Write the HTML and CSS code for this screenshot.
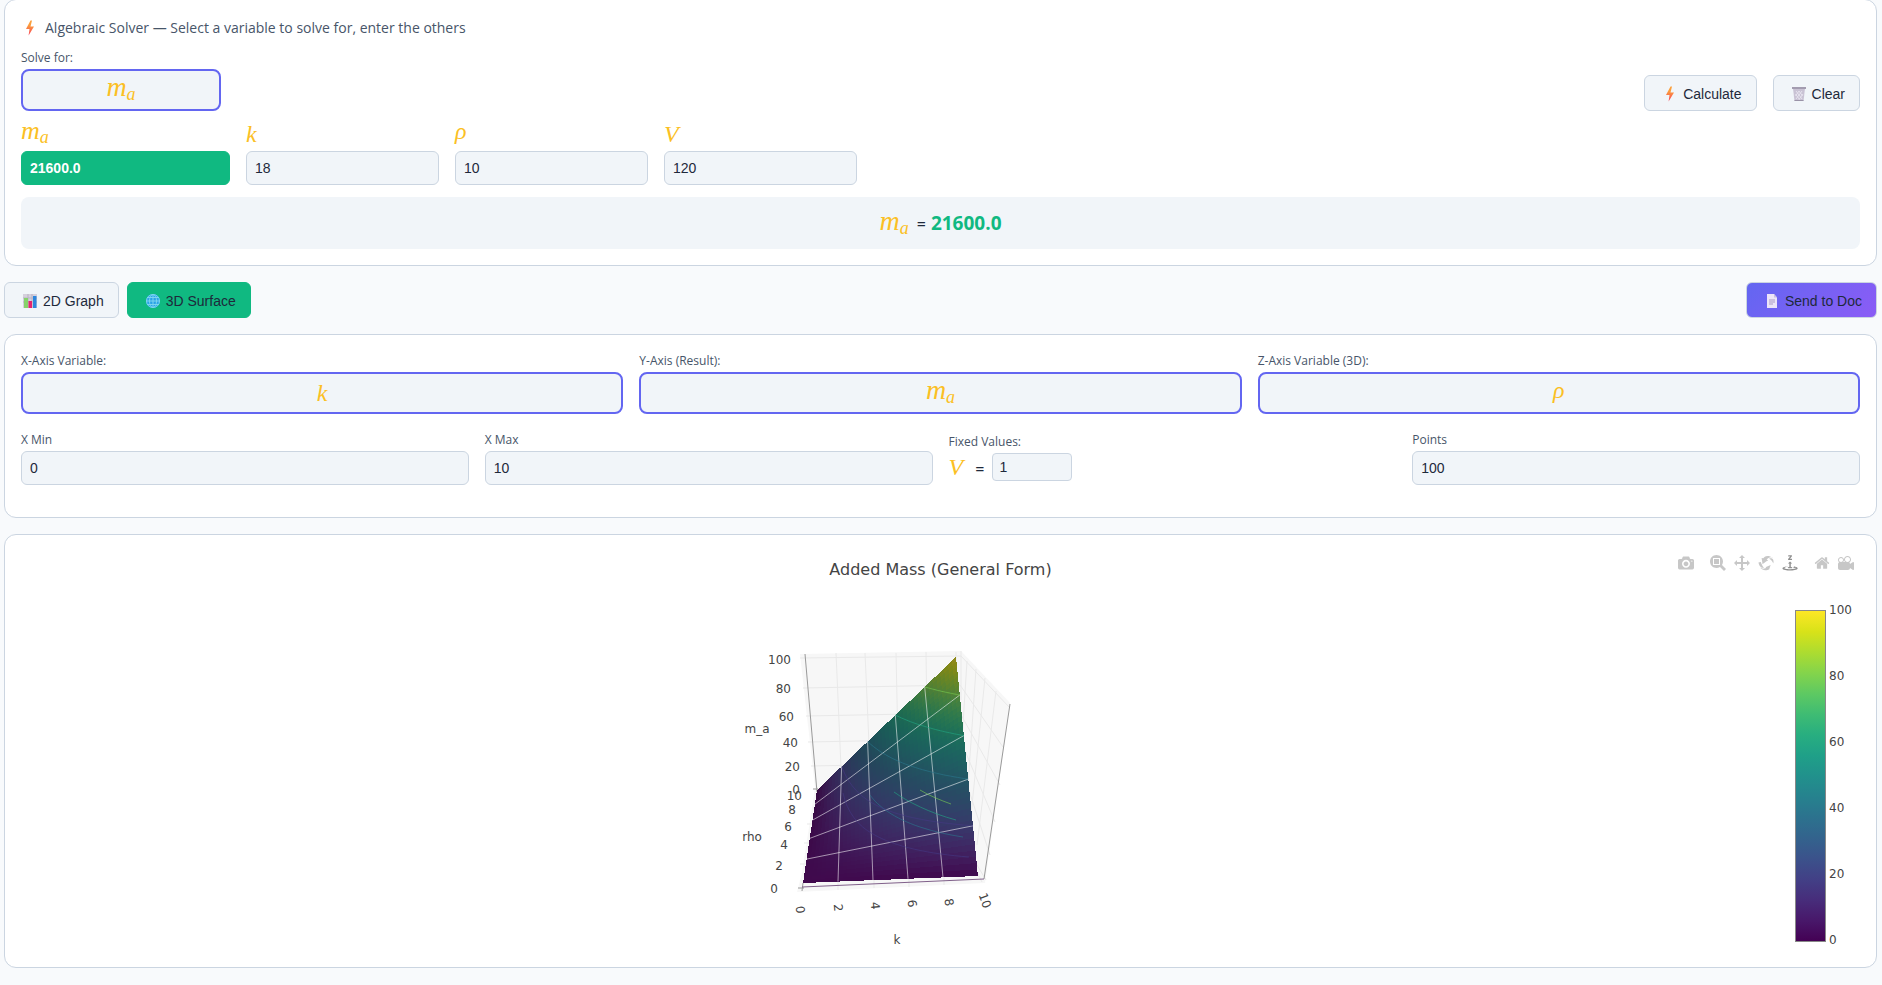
FILE: index.html
```
<!DOCTYPE html>
<html lang="en">
<head>
  <meta charset="UTF-8" />
  <meta name="viewport" content="width=device-width, initial-scale=1.0" />
  <title>Added Mass (General Form)</title>
  <link rel="stylesheet" href="styles.css">
</head>
<body>
  <svg class="defs" aria-hidden="true">
    <defs>
      <linearGradient id="boltFill" x1="0" y1="0" x2="0" y2="1">
        <stop offset="0.3" stop-color="#fb9f3c" />
        <stop offset="1" stop-color="#f8405a" />
      </linearGradient>
      <symbol id="bolt" viewBox="0 0 18 18">
        <path d="M9.5 1.5 5 10h3.5L7.6 16.500 13 7.500H9.500L11 1.500z" fill="url(#boltFill)" />
      </symbol>
      <symbol id="trash" viewBox="0 0 18 18">
        <path d="M3 3.500h12L13.500 16h-9z" fill="#c9c2d4" />
        <path d="M2 2h14v2H2z" fill="#a39cb0" />
        <path d="M6 6l6 8M9 6l3.500 5M5.500 9l4 5.500M12 6l-6 8M9 6 5.500 11M13 9l-4 5.500" stroke="#e6e2ee" stroke-width="1" />
        <path d="M4.500 15.500h9" stroke="#9a93a8" />
      </symbol>
      <symbol id="chart" viewBox="0 0 18 18">
        <path d="M2 2h14v14H2z" fill="#d5d0dc" />
        <path d="M2 6h14M2 10h14M7 2v14M11 2v14" stroke="#b9b3c4" />
        <path d="M3 6h4v10H3z" fill="#86d36a" />
        <path d="M7.500 9h3.500v7H7.500z" fill="#e5246e" />
        <path d="M12 4h3.500v12H12z" fill="#2e86dd" />
      </symbol>
      <symbol id="globe" viewBox="0 0 18 18">
        <circle cx="9" cy="9" r="7" fill="#2aa3e8" />
        <g fill="none" stroke="#7ad4f0" stroke-width="1">
          <circle cx="9" cy="9" r="6.500" />
          <ellipse cx="9" cy="9" rx="3.500" ry="6.500" />
          <path d="M9 2v14M2 9h14M3 5.500h12M3 12.500h12" />
        </g>
      </symbol>
      <symbol id="page" viewBox="0 0 18 18">
        <path d="M4 2h7l3 3.500V16H4z" fill="#ece4f8" />
        <path d="M11 2v3.500h3z" fill="#cbbfe0" />
        <path d="M6 8h6M6 10h6M6 12h4" stroke="#a99bc4" />
      </symbol>
    </defs>
  </svg>

  <main>
    <section class="card solver">
      <div class="card-title"><svg class="icon"><use href="#bolt" /></svg>Algebraic Solver — Select a variable to solve for, enter the others</div>

      <div class="solver-top">
        <div class="solve-for">
          <span class="label" id="solveLabel">Solve for:</span>
          <button class="picker" type="button" aria-haspopup="listbox" aria-labelledby="solveLabel"><span class="math deep wide">m<sub>a</sub></span></button>
        </div>
        <div class="actions">
          <button class="btn" type="button"><svg class="icon"><use href="#bolt" /></svg>Calculate</button>
          <button class="btn" type="button"><svg class="icon"><use href="#trash" /></svg>Clear</button>
        </div>
      </div>

      <div class="vars">
        <div class="var">
          <label for="var_ma"><span class="math deep wide">m<sub>a</sub></span></label>
          <input class="field solved" id="var_ma" type="text" value="21600.0" readonly>
        </div>
        <div class="var">
          <label for="var_k"><span class="math">k</span></label>
          <input class="field" id="var_k" type="text" value="18">
        </div>
        <div class="var">
          <label for="var_rho"><span class="math deep">ρ</span></label>
          <input class="field" id="var_rho" type="text" value="10">
        </div>
        <div class="var">
          <label for="var_V"><span class="math">V</span></label>
          <input class="field" id="var_V" type="text" value="120">
        </div>
      </div>

      <div class="result"><span class="math wide">m<sub>a</sub></span><span>=</span><strong>21600.0</strong></div>
    </section>

    <div class="tabs">
      <button class="btn" type="button"><svg class="icon"><use href="#chart" /></svg>2D Graph</button>
      <button class="btn active" type="button"><svg class="icon"><use href="#globe" /></svg>3D Surface</button>
      <button class="btn send" type="button"><svg class="icon"><use href="#page" /></svg>Send to Doc</button>
    </div>

    <section class="card">
      <div class="axes">
        <div>
          <span class="label" id="xLabel">X-Axis Variable:</span>
          <button class="picker" type="button" aria-haspopup="listbox" aria-labelledby="xLabel"><span class="math">k</span></button>
        </div>
        <div>
          <span class="label" id="yLabel">Y-Axis (Result):</span>
          <button class="picker" type="button" aria-haspopup="listbox" aria-labelledby="yLabel"><span class="math deep wide">m<sub>a</sub></span></button>
        </div>
        <div>
          <span class="label" id="zLabel">Z-Axis Variable (3D):</span>
          <button class="picker" type="button" aria-haspopup="listbox" aria-labelledby="zLabel"><span class="math deep">ρ</span></button>
        </div>
      </div>
      <div class="ranges">
        <div>
          <label class="label" for="xMin">X Min</label>
          <input class="field" id="xMin" type="text" value="0">
        </div>
        <div>
          <label class="label" for="xMax">X Max</label>
          <input class="field" id="xMax" type="text" value="10">
        </div>
        <div>
          <span class="label fixed-label">Fixed Values:</span>
          <div class="fixed">
            <label for="fixed_V"><span class="math">V</span> =</label>
            <input class="field small" id="fixed_V" type="text" value="1">
          </div>
        </div>
        <div>
          <label class="label" for="points">Points</label>
          <input class="field" id="points" type="text" value="100">
        </div>
      </div>
    </section>

    <section class="card plot">
      <div class="plot-title">Added Mass (General Form)</div>

      <div class="modebar">
        <a href="#" title="Download plot as a png"><svg viewBox="0 0 1000 1000"><path transform="matrix(1 0 0 -1 0 850)" d="m500 450c-83 0-150-67-150-150 0-83 67-150 150-150 83 0 150 67 150 150 0 83-67 150-150 150z m400 150h-120c-16 0-34 13-39 29l-31 93c-6 15-23 28-40 28h-340c-16 0-34-13-39-28l-31-94c-6-15-23-28-40-28h-120c-55 0-100-45-100-100v-450c0-55 45-100 100-100h800c55 0 100 45 100 100v450c0 55-45 100-100 100z m-400-550c-138 0-250 112-250 250 0 138 112 250 250 250 138 0 250-112 250-250 0-138-112-250-250-250z m365 380c-19 0-35 16-35 35 0 19 16 35 35 35 19 0 35-16 35-35 0-19-16-35-35-35z" /></svg></a>
        <a href="#" class="group" title="Zoom"><svg viewBox="0 0 1000 1000"><path transform="matrix(1 0 0 -1 0 850)" d="m1000-25l-250 251c40 63 63 138 63 218 0 224-182 406-407 406-224 0-406-182-406-406s183-406 407-406c80 0 155 22 218 62l250-250 125 125z m-812 250l0 438 437 0 0-438-437 0z m62 375l313 0 0-312-313 0 0 312z" /></svg></a>
        <a href="#" title="Pan"><svg viewBox="0 0 1000 1000"><path transform="matrix(1 0 0 -1 0 850)" d="m1000 350l-187 188 0-125-250 0 0 250 125 0-188 187-187-187 125 0 0-250-250 0 0 125-188-188 186-187 0 125 252 0 0-250-125 0 187-188 188 188-125 0 0 250 250 0 0-126 187 188z" /></svg></a>
        <a href="#" title="Orbital rotation"><svg viewBox="0 0 1000 1000"><path transform="matrix(1 0 0 -1 0 850)" d="m922 660c-5 4-9 7-14 11-359 263-580-31-580-31l-102 28 58-400c0 1 1 1 2 2 118 108 351 249 351 249s-62 27-100 42c88 83 222 183 347 122 16-8 30-17 44-27-2 1-4 3-6 4z m36-329c0 0 64 229-88 296-62 27-124 14-175-11 157-78 225-208 249-266 8-19 11-31 11-31 2 5 6 15 11 32-5-13-8-20-8-20z m-775-239c70-31 117-50 198-32-121 80-199 346-199 346l-96-15-58-12c0 0 55-226 155-287z m603 133l-317-139c0 0 4-4 19-14 7-5 24-15 24-15s-177-147-389 4c235-287 536-112 536-112l31-22 100 299-4-1z m-298-153c6-4 14-9 24-15 0 0-17 10-24 15z" /></svg></a>
        <a href="#" class="on" title="Turntable rotation"><svg viewBox="0 0 1000 1000"><path transform="matrix(1 0 0 -1 0 850)" d="m833 5l-17 108v41l-130-65 130-66c0 0 0 38 0 39 0-1 36-14 39-25 4-15-6-22-16-30-15-12-39-16-56-20-90-22-187-23-279-23-261 0-341 34-353 59 3 60 228 110 228 110-140-8-351-35-351-116 0-120 293-142 474-142 155 0 477 22 477 142 0 50-74 79-163 96z m-374 94c-58-5-99-21-99-40 0-24 65-43 144-43 79 0 143 19 143 43 0 19-42 34-98 40v216h87l-132 135-133-135h88v-216z m167 515h-136v1c16 16 31 34 46 52l84 109v54h-230v-71h124v-1c-16-17-28-32-44-51l-89-114v-51h245v72z" /></svg></a>
        <a href="#" class="group" title="Reset camera to default"><svg viewBox="0 0 928 1000"><path transform="matrix(1 0 0 -1 0 850)" d="m786 296v-267q0-15-11-26t-25-10h-214v214h-143v-214h-214q-15 0-25 10t-11 26v267q0 1 0 2t0 2l321 264 321-264q1-1 1-4z m124 39l-34-41q-5-5-12-6h-2q-7 0-12 3l-386 322-386-322q-7-4-13-4-7 2-12 7l-35 41q-4 5-3 13t6 12l401 334q18 15 42 15t43-15l136-114v109q0 8 5 13t13 5h107q8 0 13-5t5-13v-227l122-102q5-5 6-12t-4-13z" /></svg></a>
        <a href="#" title="Reset camera to last save"><svg viewBox="0 0 1000 1000"><path transform="matrix(1 0 0 -1 0 850)" d="m938 413l-188-125c0 37-17 71-44 94 64 38 107 107 107 187 0 121-98 219-219 219-121 0-219-98-219-219 0-61 25-117 66-156h-115c30 33 49 76 49 125 0 103-84 187-187 187s-188-84-188-187c0-57 26-107 65-141-38-22-65-62-65-109v-250c0-70 56-126 125-126h500c69 0 125 56 125 126l188-126c34 0 62 28 62 63v375c0 35-28 63-62 63z m-750 0c-69 0-125 56-125 125s56 125 125 125 125-56 125-125-56-125-125-125z m406-1c-87 0-157 70-157 157 0 86 70 156 157 156s156-70 156-156-70-157-156-157z" /></svg></a>
      </div>

      <div class="plot-body">
        <svg class="scene" viewBox="741 600 400 351">
          <path class="wall" d="M800 654 961 651 1010 703 985 883 797 892 802 873 815 788z" />
          <g class="grid">
            <path d="M800 658 961 656 1009 707M803 688 960 685 1003 747M806 716 960 713 1000 785M808 742 960 739 995 822M811 766 960 763 990 855" />
            <path d="M836 653 842 790M865 653 871 790M896 653 899 790M926 652 928 790M956 652 956 700" />
            <path d="M961 651V700M967 661 962 740M976 669 967 800M985 678 971 815M996 691 977 845" />
            <path d="M838 880V890M874 878V888M909 877V887M944 875V885M978 874 982 882M968 850 986 880" />
            <path d="M800 864H810M804 843H812M807 824H815" />
          </g>
          <path class="axis" d="M805 654 817 792M813 789H818M1010 704 984 879M798 888H804M803 883 802 891" />
          <path class="axis x" d="M802 887 984 879" />
          <g class="surface" id="surface"></g>
          <g class="mesh" id="mesh"></g>
          <g class="contours" id="contours">
            <path stroke="#443983" d="M843 793C847 812 858 826 873 834 895 847 930 854 969 857" />
            <path stroke="#2a788e" d="M870 795C878 806 893 818 920 827 935 832 950 835 963 837" />
            <path stroke="#22a884" d="M894 792C908 802 930 813 956 820" />
            <path stroke="#7ad151" d="M920 790C930 796 940 800 951 804" />
          </g>
          <g class="ticks end">
            <text x="791" y="664">100</text>
            <text x="791" y="693">80</text>
            <text x="794" y="721">60</text>
            <text x="798" y="747">40</text>
            <text x="800" y="771">20</text>
            <text x="800" y="794">0</text>
            <text x="802" y="800">10</text>
            <text x="796" y="814">8</text>
            <text x="792" y="831">6</text>
            <text x="788" y="849">4</text>
            <text x="783" y="870">2</text>
            <text x="778" y="893">0</text>
          </g>
          <g class="ticks">
            <text transform="translate(796 910) rotate(85)">0</text>
            <text transform="translate(834 908) rotate(85)">2</text>
            <text transform="translate(871 906) rotate(85)">4</text>
            <text transform="translate(908 904) rotate(82)">6</text>
            <text transform="translate(945 903) rotate(80)">8</text>
            <text transform="translate(981 902) rotate(70)">10</text>
            <text x="757" y="733">m_a</text>
            <text x="752" y="841">rho</text>
            <text x="897" y="944">k</text>
          </g>
        </svg>
        <div class="colorbar">
          <div class="bar"></div>
          <div class="bar-ticks"><span>100</span><span>80</span><span>60</span><span>40</span><span>20</span><span>0</span></div>
        </div>
      </div>
    </section>
  </main>

  <script src="surface.js"></script>
</body>
</html>
```

FILE: styles.css
```
* {
  box-sizing: border-box;
}
body {
  margin: 0;
  font-family: 'Segoe UI', 'Open Sans', sans-serif;
  font-size: 14px;
  background-color: #f8fafc;
  color: #1e293b;
}
main {
  margin: -1px 5px 0 4px;
  display: flex;
  flex-direction: column;
  gap: 16px;
  padding-bottom: 16px;
}
.defs {
  position: absolute;
  width: 0;
  height: 0;
}
.card {
  background: #fff;
  border: 1px solid #cbd5e1;
  border-radius: 12px;
  padding: 16px;
}
.card-title {
  display: flex;
  align-items: center;
  gap: 6px;
  line-height: 24px;
  margin-bottom: 8px;
  color: #475569;
}
.icon {
  width: 18px;
  height: 18px;
  flex: none;
}
.label {
  display: block;
  font-size: 12px;
  line-height: 19px;
  margin-bottom: 2px;
  color: #475569;
}

/* math symbols */
.math {
  display: inline-block;
  font-family: 'Liberation Serif', serif;
  font-style: italic;
  font-size: 24px;
  line-height: 28px;
  color: #fbbf24;
}
.math.wide {
  font-size: 28px;
}
.math.deep {
  line-height: 22px;
  padding-bottom: 6px;
}
.math sub {
  font-size: 18px;
  line-height: 0;
  vertical-align: -4px;
}

/* controls */
button {
  font-family: 'Liberation Sans', Arial, sans-serif;
  cursor: pointer;
}
.btn {
  display: flex;
  align-items: center;
  gap: 4px;
  height: 36px;
  padding: 2px 14px 0 16px;
  font-size: 14px;
  color: #1e293b;
  background: #f1f5f9;
  border: 1px solid #cbd5e1;
  border-radius: 6px;
}
.btn.active {
  background: #10b981;
  border-color: #10b981;
}
.btn.send {
  margin-left: auto;
  background: linear-gradient(135deg, #6366f1, #8b5cf6);
}
.picker {
  display: flex;
  align-items: center;
  justify-content: center;
  width: 100%;
  height: 42px;
  padding: 0;
  background: #f1f5f9;
  border: 2px solid #6366f1;
  border-radius: 8px;
}
.field {
  display: block;
  width: 100%;
  height: 34px;
  padding: 0 8px;
  font-family: 'Liberation Sans', Arial, sans-serif;
  font-size: 14px;
  color: #1e293b;
  background: #f1f5f9;
  border: 1px solid #cbd5e1;
  border-radius: 6px;
}
.field.small {
  width: 80px;
  height: 28px;
  padding: 0 6px;
  border-radius: 4px;
}
.field.solved {
  width: 209px;
  color: #fff;
  font-weight: bold;
  background: #10b981;
  border-color: #10b981;
}

/* solver */
.solver-top {
  display: flex;
  justify-content: space-between;
  align-items: flex-end;
}
.solve-for {
  width: 200px;
}
.actions {
  display: flex;
  gap: 16px;
}
.vars {
  display: flex;
  flex-wrap: wrap;
  gap: 16px;
  margin-top: 9px;
}
.var {
  min-width: 193px;
}
.var .field:not(.solved) {
  width: 193px;
}
.var label {
  display: flex;
  height: 28px;
  margin-bottom: 3px;
}
.var .wide {
  font-size: 26px;
}
.result {
  display: flex;
  justify-content: center;
  align-items: baseline;
  height: 52px;
  margin-top: 12px;
  padding-top: 10px;
  font-size: 16px;
  line-height: 28px;
  background: #f1f5f9;
  border-radius: 8px;
}
.result .math {
  margin-right: 8px;
}
.result strong {
  margin-left: 5px;
  font-size: 19px;
  color: #10b981;
}
.tabs {
  display: flex;
  gap: 8px;
}

/* axis setup */
.axes {
  display: grid;
  grid-template-columns: repeat(3, 1fr);
  gap: 16px;
  margin-bottom: 16px;
}
.ranges {
  display: grid;
  grid-template-columns: repeat(4, 1fr);
  gap: 16px;
  margin-bottom: 16px;
}
.fixed-label {
  line-height: 23px;
  margin-bottom: 0;
}
.fixed {
  display: flex;
  align-items: center;
  gap: 8px;
  height: 28px;
  font-size: 16px;
}
.fixed .math {
  margin-right: 8px;
}

/* plot */
.plot {
  position: relative;
  font-family: Verdana, 'DejaVu Sans', sans-serif;
  color: #444;
}
.plot-title {
  height: 49px;
  font-size: 16px;
  line-height: 38px;
  text-align: center;
}
.modebar {
  position: absolute;
  top: 20px;
  right: 18px;
  display: flex;
}
.modebar a {
  padding: 0 4px;
}
.modebar a.group {
  margin-left: 8px;
}
.modebar svg {
  display: block;
  width: 16px;
  height: 16px;
  fill: #c7c7c7;
}
.modebar .on svg {
  fill: #8f8f8f;
}
.plot-body {
  display: grid;
  grid-template-columns: 1fr 400px 1fr;
}
.scene {
  grid-column: 2;
  width: 400px;
  height: 351px;
}
.wall {
  fill: #f7f7f7;
}
.grid {
  fill: none;
  stroke: #e9e9e9;
}
.axis {
  fill: none;
  stroke: #999;
}
.axis.x {
  stroke: #80608a;
}
.surface {
  shape-rendering: crispEdges;
}
.mesh {
  fill: none;
  stroke: #fff;
  stroke-opacity: 0.55;
}
.contours {
  fill: none;
  stroke-opacity: 0.6;
}
.ticks {
  font-size: 12px;
  fill: #444;
  text-anchor: middle;
}
.ticks.end {
  text-anchor: end;
}
.colorbar {
  display: flex;
  justify-content: flex-end;
  gap: 3px;
  padding: 3px 8px 0 0;
}
.bar {
  width: 31px;
  height: 332px;
  margin-top: 7px;
  border: 1px solid #888;
  background: linear-gradient(to top, #440154, #48186a, #472d7b, #424086, #3b528b, #33638d, #2c728e, #26828e, #21918c, #1fa088, #28ae80, #3fbc73, #5ec962, #84d44b, #addc30, #d8e219, #fde725);
}
.bar-ticks {
  display: flex;
  flex-direction: column;
  justify-content: space-between;
  height: 345px;
  font-size: 12px;
  line-height: 15px;
}
```

FILE: surface.js
```
// m_a = k * rho * V, drawn over k and rho from 0 to 10
const NS = 'http://www.w3.org/2000/svg';
const STEPS = 40;
const VIRIDIS = ['#440154', '#48186a', '#472d7b', '#424086', '#3b528b', '#33638d', '#2c728e', '#26828e', '#21918c', '#1fa088', '#28ae80', '#3fbc73', '#5ec962', '#84d44b', '#addc30', '#d8e219', '#fde725'];

// projected corners of the surface: x, y, perspective weight
const C00 = [803, 883, 1];
const C10 = [978, 876, 1];
const C01 = [817, 790, 1.384];
const C11 = [956, 657, 1.19];

function project(u, v) {
  const parts = [[C00, (1 - u) * (1 - v)], [C10, u * (1 - v)], [C01, (1 - u) * v], [C11, u * v]];
  let x = 0, y = 0, w = 0;
  for (const [c, b] of parts) {
    x += c[0] * c[2] * b;
    y += c[1] * c[2] * b;
    w += c[2] * b;
  }
  return (x / w).toFixed(1) + ' ' + (y / w).toFixed(1);
}

function viridis(t, light) {
  const pos = t * (VIRIDIS.length - 1);
  const i = Math.min(Math.floor(pos), VIRIDIS.length - 2);
  const rgb = [1, 3, 5].map(n => {
    const a = parseInt(VIRIDIS[i].substr(n, 2), 16);
    const b = parseInt(VIRIDIS[i + 1].substr(n, 2), 16);
    return Math.round((a + (b - a) * (pos - i)) * light + 8);
  });
  return 'rgb(' + rgb.join(',') + ')';
}

function addPath(parent, d, attrs) {
  const path = document.createElementNS(NS, 'path');
  path.setAttribute('d', d);
  for (const name in attrs) path.setAttribute(name, attrs[name]);
  parent.appendChild(path);
}

const surface = document.getElementById('surface');
for (let j = STEPS - 1; j >= 0; j--) {
  for (let i = 0; i < STEPS; i++) {
    const u = i / STEPS, v = j / STEPS, s = 1 / STEPS;
    const t = (u + s / 2) * (v + s / 2);
    const light = 0.82 - 0.14 * v - 0.12 * Math.min(1, t * 3);
    addPath(surface, 'M' + [project(u, v), project(u + s, v), project(u + s, v + s), project(u, v + s)].join('L') + 'z',
      { fill: viridis(t, light) });
  }
}

const mesh = document.getElementById('mesh');
for (let n = 2; n <= 8; n += 2) {
  addPath(mesh, 'M' + project(n / 10, 0) + 'L' + project(n / 10, 1));
  addPath(mesh, 'M' + project(0, n / 10) + 'L' + project(1, n / 10));
}

// level lines on the surface itself
const contours = document.getElementById('contours');
[[0.2, '#443983'], [0.4, '#2a788e'], [0.6, '#22a884'], [0.8, '#7ad151']].forEach(([level, color]) => {
  const points = [];
  for (let n = 0; n <= 30; n++) {
    const u = level + (1 - level) * n / 30;
    points.push(project(u, level / u));
  }
  addPath(contours, 'M' + points.join('L'), { stroke: color });
});
```
